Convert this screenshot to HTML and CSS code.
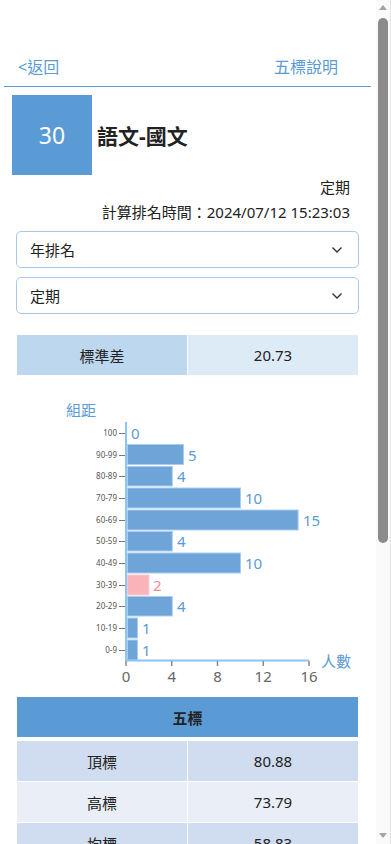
FILE: index.html
```html
<!DOCTYPE html>
<html lang="zh-Hant">
<head>
<meta charset="utf-8">
<title>語文-國文</title>
<link rel="stylesheet" href="styles.css">
</head>
<body>
<div class="viewport">
<div class="page">
  <header class="topbar">
    <span class="back">&lt;返回</span>
    <span class="help">五標說明</span>
  </header>

  <section class="subject">
    <div class="score">30</div>
    <h1 class="title">語文-國文</h1>
  </section>

  <div class="meta">
    <div>定期</div>
    <div>計算排名時間：2024/07/12 15:23:03</div>
  </div>

  <div class="select">
    <span>年排名</span>
    <svg class="chev" width="12" height="8" viewBox="0 0 12 8"><path d="M1.5 1.5 L6 6 L10.5 1.5" fill="none" stroke="#333" stroke-width="1.4"/></svg>
  </div>
  <div class="select">
    <span>定期</span>
    <svg class="chev" width="12" height="8" viewBox="0 0 12 8"><path d="M1.5 1.5 L6 6 L10.5 1.5" fill="none" stroke="#333" stroke-width="1.4"/></svg>
  </div>

  <div class="std">
    <div class="std-k">標準差</div>
    <div class="std-v">20.73</div>
  </div>

  <svg class="chart" width="376" height="296" viewBox="0 395 376 296">
    <text x="66" y="416" class="axname">組距</text>
    <text x="321" y="667" class="axname">人數</text>

    <g class="cats">
      <text x="117" y="436">100</text>
      <text x="117" y="458">90-99</text>
      <text x="117" y="479">80-89</text>
      <text x="117" y="501">70-79</text>
      <text x="117" y="523">60-69</text>
      <text x="117" y="544">50-59</text>
      <text x="117" y="566">40-49</text>
      <text x="117" y="588">30-39</text>
      <text x="117" y="609">20-29</text>
      <text x="117" y="631">10-19</text>
      <text x="117" y="653">0-9</text>
    </g>
    <g stroke="#777" stroke-width="1">
      <line x1="119" x2="125" y1="433.5" y2="433.5"/>
      <line x1="119" x2="125" y1="455.5" y2="455.5"/>
      <line x1="119" x2="125" y1="476.5" y2="476.5"/>
      <line x1="119" x2="125" y1="498.5" y2="498.5"/>
      <line x1="119" x2="125" y1="520.5" y2="520.5"/>
      <line x1="119" x2="125" y1="541.5" y2="541.5"/>
      <line x1="119" x2="125" y1="563.5" y2="563.5"/>
      <line x1="119" x2="125" y1="585.5" y2="585.5"/>
      <line x1="119" x2="125" y1="606.5" y2="606.5"/>
      <line x1="119" x2="125" y1="628.5" y2="628.5"/>
      <line x1="119" x2="125" y1="650.5" y2="650.5"/>
    </g>

    <g class="bars" stroke="#a9cdf0" stroke-width="1">
      <rect x="127.5" y="444.5" width="56" height="20"/>
      <rect x="127.5" y="466.5" width="44.8" height="19.5"/>
      <rect x="127.5" y="488" width="113" height="20"/>
      <rect x="127.5" y="510" width="170.6" height="20"/>
      <rect x="127.5" y="531.5" width="44.8" height="19.5"/>
      <rect x="127.5" y="553" width="113" height="20"/>
      <rect x="127.5" y="575" width="21.4" height="20" class="pink"/>
      <rect x="127.5" y="596.5" width="44.8" height="19.5"/>
      <rect x="127.5" y="618" width="10" height="20"/>
      <rect x="127.5" y="640" width="10" height="20"/>
    </g>

    <g class="vals">
      <text x="131" y="439">0</text>
      <text x="188" y="461">5</text>
      <text x="177" y="482">4</text>
      <text x="245" y="504">10</text>
      <text x="303" y="526">15</text>
      <text x="177" y="547">4</text>
      <text x="245" y="569">10</text>
      <text x="153" y="591" class="pinktxt">2</text>
      <text x="177" y="612">4</text>
      <text x="142" y="634">1</text>
      <text x="142" y="656">1</text>
    </g>

    <line x1="126" x2="126" y1="422" y2="661" stroke="#8cc4f4" stroke-width="2"/>
    <line x1="126" x2="309" y1="660.5" y2="660.5" stroke="#8cc4f4" stroke-width="2"/>
    <g stroke="#888" stroke-width="1.5">
      <line x1="126" x2="126" y1="661" y2="666"/>
      <line x1="171.7" x2="171.7" y1="661" y2="666"/>
      <line x1="217.5" x2="217.5" y1="661" y2="666"/>
      <line x1="263.2" x2="263.2" y1="661" y2="666"/>
      <line x1="309" x2="309" y1="661" y2="666"/>
    </g>
    <g class="ticks">
      <text x="126" y="682">0</text>
      <text x="171.7" y="682">4</text>
      <text x="217.5" y="682">8</text>
      <text x="263.2" y="682">12</text>
      <text x="309" y="682">16</text>
    </g>
  </svg>

  <table class="five">
    <thead>
      <tr><th colspan="2">五標</th></tr>
    </thead>
    <tbody>
      <tr><td>頂標</td><td>80.88</td></tr>
      <tr><td>高標</td><td>73.79</td></tr>
      <tr><td>均標</td><td>58.83</td></tr>
      <tr><td>低標</td><td>43.87</td></tr>
      <tr><td>底標</td><td>36.78</td></tr>
    </tbody>
  </table>
</div>
<div class="scrollbar" aria-hidden="true">
  <div class="arrow-up"></div>
  <div class="thumb"></div>
  <div class="track-rest"></div>
  <div class="arrow-down"></div>
</div>
</div>
</body>
</html>
```

FILE: styles.css
```css
html, body {
  margin: 0;
  padding: 0;
  height: 100%;
  overflow: hidden;
  background: #fff;
}
body {
  font-family: "Noto Sans", "Noto Sans CJK TC", sans-serif;
  color: #222;
}
.viewport {
  display: flex;
  height: 100vh;
  overflow: hidden;
}
.page {
  flex: 0 0 376px;
  width: 376px;
}
.scrollbar {
  flex: 0 0 15px;
  display: flex;
  flex-direction: column;
  align-items: center;
  background: #fafafa;
  border-right: 1px solid #e4e4e4;
  box-sizing: border-box;
  padding: 5px 0 6px;
}
.arrow-up {
  width: 0;
  height: 0;
  border-left: 4.5px solid transparent;
  border-right: 4.5px solid transparent;
  border-bottom: 5px solid #a3a3a3;
}
.thumb {
  width: 10px;
  height: 525px;
  margin-top: 8px;
  border-radius: 5px;
  background: #8b8b8b;
}
.track-rest {
  flex: 1;
}
.arrow-down {
  width: 0;
  height: 0;
  border-left: 4.5px solid transparent;
  border-right: 4.5px solid transparent;
  border-top: 5px solid #a3a3a3;
}
.topbar {
  display: flex;
  justify-content: space-between;
  align-items: center;
  margin: 0 5px 0 4px;
  padding: 56px 33px 8px 14px;
  height: 22px;
  border-bottom: 1px solid #5b9bd5;
  font-size: 16px;
  line-height: 22px;
  color: #5b9bd5;
}
.subject {
  display: flex;
  align-items: center;
  margin-top: 8px;
  padding-left: 12px;
}
.score {
  width: 80px;
  height: 80px;
  background: #5b9bd5;
  color: #fff;
  font-size: 23px;
  display: flex;
  align-items: center;
  justify-content: center;
}
.title {
  margin: 0 0 0 5px;
  font-size: 21px;
  font-weight: 700;
  color: #222;
}
.meta {
  text-align: right;
  padding-right: 26px;
  font-size: 15px;
  line-height: 25px;
  margin-top: 0;
  color: #222;
}
.select {
  display: flex;
  justify-content: space-between;
  align-items: center;
  margin: 6px 17px 0 16px;
  height: 35px;
  padding: 0 15px 0 13px;
  border: 1px solid #a8c8ee;
  border-radius: 5px;
  font-size: 15px;
  color: #222;
}
.select + .select {
  margin-top: 9px;
}
.chev {
  display: block;
}
.std {
  display: flex;
  gap: 1px;
  margin: 21px 18px 0 17px;
  height: 40px;
  font-size: 15px;
  color: #222;
}
.std-k, .std-v {
  flex: 1;
  display: flex;
  align-items: center;
  justify-content: center;
}
.std-k { background: #bdd7ee; }
.std-v { background: #ddebf7; }
.chart {
  display: block;
  margin-top: 20px;
  font-family: "Noto Sans", "Noto Sans CJK TC", sans-serif;
}
.axname {
  font-size: 15px;
  fill: #5b9bd5;
}
.cats text {
  font-size: 8px;
  fill: #555;
  text-anchor: end;
}
.bars rect { fill: #6ea4d8; }
.bars rect.pink { fill: #f9b3b9; stroke: #fbc9cd; }
.vals text {
  font-size: 15px;
  fill: #5b9bd5;
}
.vals text.pinktxt { fill: #f38e98; }
.ticks text {
  font-size: 15px;
  fill: #666;
  text-anchor: middle;
}
.five {
  margin: 6px 18px 0 17px;
  width: 341px;
  border-collapse: collapse;
  font-size: 15px;
  color: #222;
}
.five th {
  background: #5b9bd5;
  height: 40px;
  padding: 0;
  font-weight: 700;
  border-bottom: 4px solid #fff;
}
.five td {
  height: 40px;
  padding: 0;
  text-align: center;
  width: 50%;
  border: 1px solid #fff;
  border-top: 0;
}
.five td:first-child { border-left: 0; }
.five td:last-child { border-right: 0; }
.five tbody tr:nth-child(odd) td { background: #d0dcef; }
.five tbody tr:nth-child(even) td { background: #e9eef7; }
```
